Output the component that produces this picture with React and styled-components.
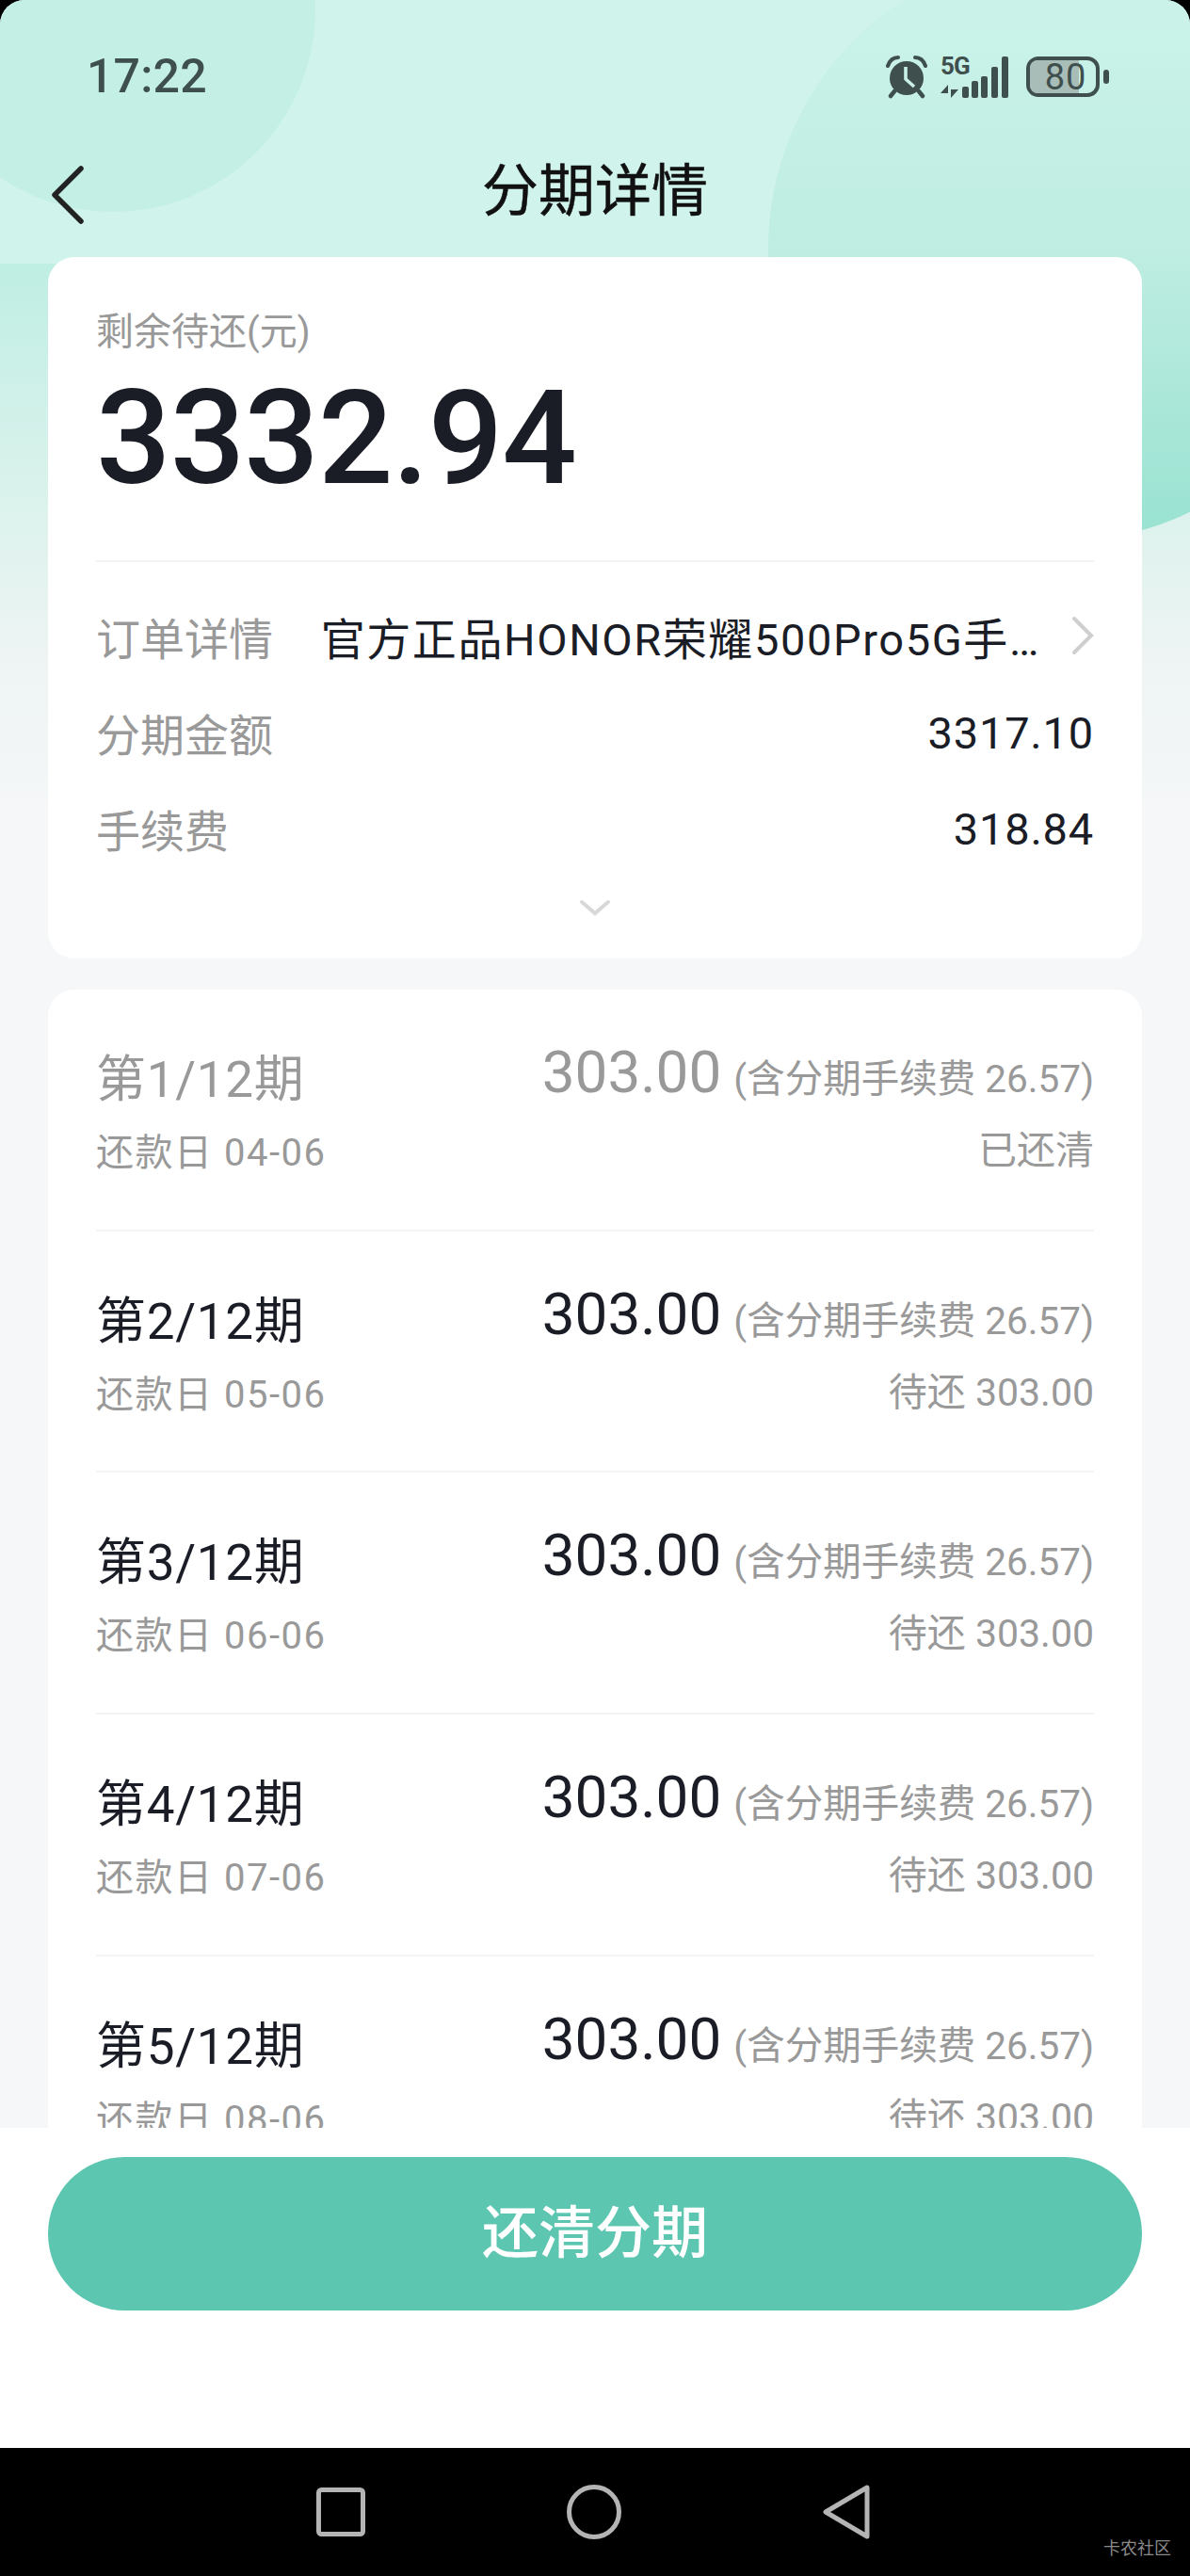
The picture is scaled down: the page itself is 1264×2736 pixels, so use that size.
import React from "react";
import styled, { createGlobalStyle } from "styled-components";

const GlobalStyle = createGlobalStyle`
  html, body {
    margin: 0;
    padding: 0;
    background: #000;
  }
  * {
    box-sizing: border-box;
  }
  body {
    font-family: Roboto, "Noto Sans CJK SC", sans-serif;
  }
`;

const Screen = styled.div`
  width: 1264px;
  height: 2736px;
  display: flex;
  flex-direction: column;
  background: #000;
  overflow: hidden;
`;

const Main = styled.main`
  position: relative;
  flex: 0 0 2260px;
  overflow: hidden;
  border-radius: 26px 26px 0 0;
  background: linear-gradient(
    #d0f3eb 0,
    #d0f3eb 280px,
    #bfeee3 280px,
    #daf2ec 520px,
    #eef4f3 700px,
    #f5f7f9 860px
  );
`;

const LeftBlob = styled.div`
  position: absolute;
  left: -95px;
  top: -205px;
  width: 430px;
  height: 430px;
  border-radius: 50%;
  background: #c4efe5;
`;

const RightBlob = styled.div`
  position: absolute;
  left: 816px;
  top: -49px;
  width: 624px;
  height: 624px;
  border-radius: 50%;
  background: linear-gradient(#caf2e9 10%, #bfede2 50%, #98e2d1 100%);
`;

const Content = styled.div`
  position: relative;
  padding: 0 51px;
`;

const StatusBar = styled.div`
  height: 130px;
  margin: 0 45px 0 41px;
  padding-top: 53px;
  display: flex;
  justify-content: space-between;
  align-items: flex-start;
  color: #3e4f4e;
`;

const Clock = styled.span`
  font-size: 50px;
  line-height: 56px;
  font-weight: 500;
  letter-spacing: 0.2px;
`;

const StatusIcons = styled.div`
  display: flex;
  align-items: flex-start;
  margin-top: 6px;
`;

const Alarm = styled.svg`
  width: 44px;
  height: 46px;
  margin-right: 14px;
`;

const Signal = styled.svg`
  width: 74px;
  height: 46px;
  margin-right: 17px;
  overflow: visible;
`;

const Battery = styled.div`
  position: relative;
  width: 78px;
  height: 43px;
  margin-top: 1px;
  border: 4px solid #3e4f4e;
  border-radius: 13px;
  display: flex;
  align-items: center;
  justify-content: center;
  &::before {
    content: "";
    position: absolute;
    left: 0;
    top: 0;
    bottom: 0;
    width: 52px;
    background: #a9bdb8;
    border-radius: 8px 0 0 8px;
  }
  &::after {
    content: "";
    position: absolute;
    right: -14px;
    top: 10px;
    width: 6px;
    height: 15px;
    background: #3e4f4e;
    border-radius: 3px;
  }
`;

const BatteryLevel = styled.span`
  position: relative;
  padding-left: 6px;
  font-size: 38px;
  line-height: 36px;
  letter-spacing: 1px;
  color: #3e4f4e;
`;

const TitleBar = styled.header`
  height: 143px;
  padding-top: 5px;
  display: flex;
  align-items: center;
  justify-content: center;
  position: relative;
`;

const BackIcon = styled.svg`
  position: absolute;
  left: 2px;
  top: 45px;
  width: 36px;
  height: 64px;
`;

const Title = styled.h1`
  margin: 0;
  font-size: 60px;
  line-height: 80px;
  font-weight: 400;
  color: #111;
  -webkit-text-stroke: 0.5px #111;
`;

const Card = styled.section`
  background: #fff;
  border-radius: 28px;
  padding: 0 51px;
`;

const SummaryCard = styled(Card)`
  height: 745px;
  margin-bottom: 33px;
`;

const SummaryHead = styled.div`
  height: 324px;
  padding-top: 55px;
  border-bottom: 2px solid #f2f3f4;
`;

const Label = styled.div`
  font-size: 40px;
  line-height: 50px;
  color: #999;
`;

const Balance = styled.div`
  margin-top: 5px;
  font-size: 140px;
  line-height: 164px;
  font-weight: 500;
  color: #1a1c26;
  letter-spacing: -0.9px;
`;

const DetailList = styled.div`
  padding-top: 27px;
`;

const DetailRow = styled.div`
  height: 102px;
  display: flex;
  align-items: center;
  justify-content: space-between;
`;

const DetailName = styled.span`
  font-size: 47px;
  color: #999;
`;

const DetailValue = styled.span`
  padding-top: 2px;
  font-size: 47px;
  color: #1a1c26;
  letter-spacing: 0.8px;
`;

const OrderLink = styled.span`
  display: flex;
  align-items: center;
  gap: 33px;
`;

const OrderName = styled.span`
  font-size: 47px;
  color: #1a1c26;
  letter-spacing: 1.6px;
  white-space: nowrap;
`;

const Arrow = styled.svg`
  width: 24px;
  height: 42px;
`;

const Expand = styled.div`
  display: flex;
  justify-content: center;
  padding-top: 25px;
`;

const ExpandIcon = styled.svg`
  width: 34px;
  height: 18px;
`;

const PlanRow = styled.div`
  height: 256.7px;
  padding-top: 52px;
  display: flex;
  justify-content: space-between;
  border-bottom: 2px solid #f3f4f5;
  color: ${(props) => (props.$paid ? "#999" : "#1a1c26")};
`;

const PlanLeft = styled.div`
  padding-top: 8px;
`;

const PlanName = styled.div`
  font-size: 53px;
  line-height: 72px;
  letter-spacing: 0.7px;
`;

const PlanDate = styled.div`
  margin-top: 12px;
  font-size: 40px;
  line-height: 60px;
  letter-spacing: 1.5px;
  color: #999;
`;

const PlanRight = styled.div`
  text-align: right;
`;

const PlanAmount = styled.div`
  font-size: 62px;
  line-height: 72px;
  white-space: nowrap;
`;

const PlanFee = styled.span`
  margin-left: 13px;
  font-size: 40.5px;
  color: #999;
`;

const PlanStatus = styled.div`
  margin-top: 10px;
  font-size: 41px;
  line-height: 60px;
  color: #999;
`;

const Footer = styled.footer`
  flex: 0 0 340px;
  padding: 31px 51px 0;
  background: #fff;
`;

const PayButton = styled.button`
  width: 100%;
  height: 163px;
  padding: 0 0 12px;
  border: 0;
  border-radius: 82px;
  background: #5cc6b0;
  color: #fff;
  font-family: inherit;
  font-size: 60px;
  font-weight: 500;
`;

const NavBar = styled.nav`
  position: relative;
  flex: 0 0 136px;
  padding-right: 4px;
  display: flex;
  align-items: center;
  justify-content: center;
  gap: 214px;
  background: #000;
`;

const NavIcon = styled.svg`
  display: block;
`;

const Watermark = styled.span`
  position: absolute;
  right: 20px;
  bottom: 18px;
  font-size: 18px;
  color: #8a8a8a;
`;

const plans = [
  { id: 1, date: "04-06", paid: true },
  { id: 2, date: "05-06" },
  { id: 3, date: "06-06" },
  { id: 4, date: "07-06" },
  { id: 5, date: "08-06" },
];

function StatusRow() {
  return (
    <StatusBar>
      <Clock>17:22</Clock>
      <StatusIcons>
        <Alarm viewBox="0 0 44 46">
          <circle cx="22" cy="24" r="18" fill="#3e4f4e" />
          <path d="M2 11C4 5 8 2 13 2" stroke="#3e4f4e" strokeWidth="4" fill="none" strokeLinecap="round" />
          <path d="M42 11C40 5 36 2 31 2" stroke="#3e4f4e" strokeWidth="4" fill="none" strokeLinecap="round" />
          <path d="M9 38L5 43M35 38L39 43" stroke="#3e4f4e" strokeWidth="4.5" strokeLinecap="round" />
          <path d="M21 12V25L30 33" stroke="#c8f0e7" strokeWidth="3.6" fill="none" strokeLinejoin="round" />
        </Alarm>
        <Signal viewBox="0 0 74 46">
          <text x="0" y="20" fontFamily="Roboto" fontWeight="700" fontSize="26" letterSpacing="-1" fill="#3e4f4e">
            5G
          </text>
          <path d="M8 45V31L0 40H8ZM11 31V45L19 36H11Z" fill="#3e4f4e" />
          <rect x="23" y="33" width="7" height="12" rx="2" fill="#3e4f4e" />
          <rect x="33" y="27" width="7" height="18" rx="2" fill="#3e4f4e" />
          <rect x="43" y="22" width="7" height="23" rx="2" fill="#3e4f4e" />
          <rect x="54" y="12" width="7" height="33" rx="2" fill="#3e4f4e" />
          <rect x="65" y="1" width="7" height="44" rx="2" fill="#3e4f4e" />
        </Signal>
        <Battery>
          <BatteryLevel>80</BatteryLevel>
        </Battery>
      </StatusIcons>
    </StatusBar>
  );
}

function Summary() {
  return (
    <SummaryCard>
      <SummaryHead>
        <Label>剩余待还(元)</Label>
        <Balance>3332.94</Balance>
      </SummaryHead>
      <DetailList>
        <DetailRow>
          <DetailName>订单详情</DetailName>
          <OrderLink>
            <OrderName>官方正品HONOR荣耀500Pro5G手…</OrderName>
            <Arrow viewBox="0 0 24 42">
              <path d="M3 3L21 21L3 39" stroke="#cfcfcf" strokeWidth="4" fill="none" strokeLinecap="round" />
            </Arrow>
          </OrderLink>
        </DetailRow>
        <DetailRow>
          <DetailName>分期金额</DetailName>
          <DetailValue>3317.10</DetailValue>
        </DetailRow>
        <DetailRow>
          <DetailName>手续费</DetailName>
          <DetailValue>318.84</DetailValue>
        </DetailRow>
      </DetailList>
      <Expand>
        <ExpandIcon viewBox="0 0 34 18">
          <path d="M3 3L17 15L31 3" stroke="#d8d8d8" strokeWidth="4" fill="none" strokeLinecap="round" />
        </ExpandIcon>
      </Expand>
    </SummaryCard>
  );
}

function App() {
  return (
    <Screen>
      <GlobalStyle />
      <Main>
        <LeftBlob />
        <RightBlob />
        <Content>
          <StatusRow />
          <TitleBar>
            <BackIcon viewBox="0 0 36 64">
              <path d="M33 4L5 32L33 60" stroke="#222" strokeWidth="5.5" fill="none" strokeLinecap="round" strokeLinejoin="round" />
            </BackIcon>
            <Title>分期详情</Title>
          </TitleBar>
          <Summary />
          <Card>
            {plans.map((plan) => (
              <PlanRow key={plan.id} $paid={plan.paid}>
                <PlanLeft>
                  <PlanName>第{plan.id}/12期</PlanName>
                  <PlanDate>还款日 {plan.date}</PlanDate>
                </PlanLeft>
                <PlanRight>
                  <PlanAmount>
                    303.00<PlanFee>(含分期手续费 26.57)</PlanFee>
                  </PlanAmount>
                  <PlanStatus>{plan.paid ? "已还清" : "待还 303.00"}</PlanStatus>
                </PlanRight>
              </PlanRow>
            ))}
          </Card>
        </Content>
      </Main>
      <Footer>
        <PayButton>还清分期</PayButton>
      </Footer>
      <NavBar>
        <NavIcon width="52" height="52" viewBox="0 0 52 52">
          <rect x="2.5" y="2.5" width="47" height="47" rx="3" stroke="#b4b4b4" strokeWidth="5" fill="none" />
        </NavIcon>
        <NavIcon width="58" height="58" viewBox="0 0 58 58">
          <circle cx="29" cy="29" r="26.5" stroke="#b4b4b4" strokeWidth="5" fill="none" />
        </NavIcon>
        <NavIcon width="50" height="58" viewBox="0 0 50 58">
          <path d="M47 3V55L3 29Z" stroke="#b4b4b4" strokeWidth="5" fill="none" strokeLinejoin="round" />
        </NavIcon>
        <Watermark>卡农社区</Watermark>
      </NavBar>
    </Screen>
  );
}

export default App;
